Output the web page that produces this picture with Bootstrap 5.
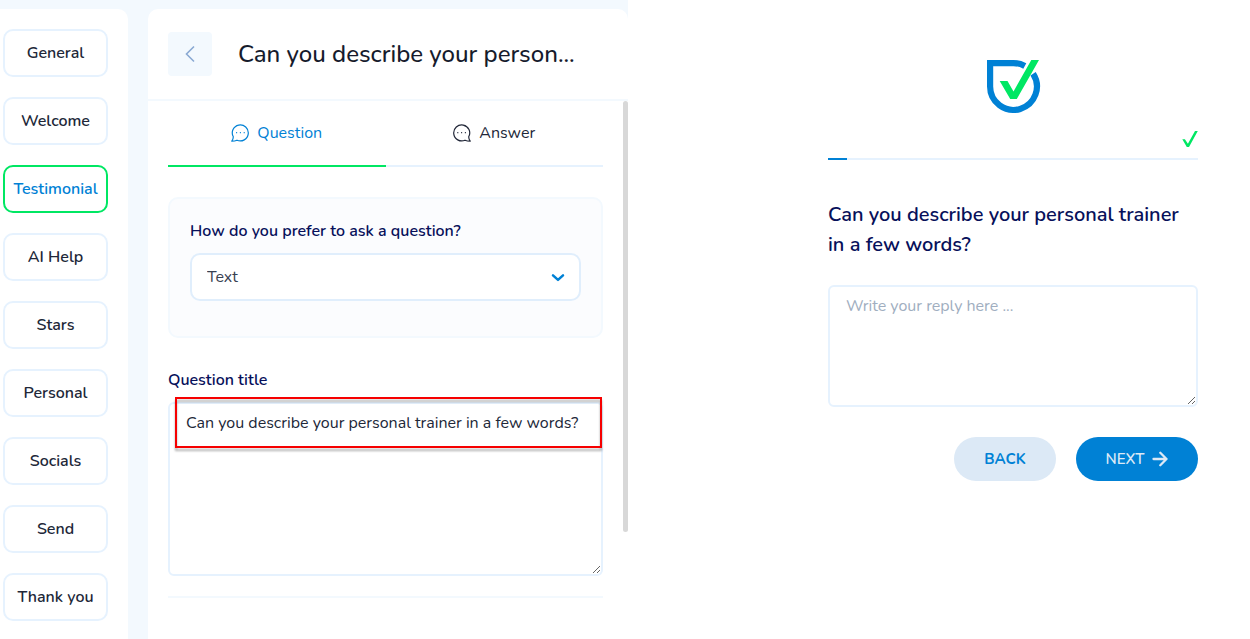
<!DOCTYPE html>
<html lang="en">
<head>
<meta charset="utf-8">
<meta name="viewport" content="width=device-width, initial-scale=1">
<title>Testimonial form editor</title>
<link href="https://cdn.jsdelivr.net/npm/bootstrap@5.3.0/dist/css/bootstrap.min.css" rel="stylesheet">
<style>
  :root { --brand: #0081d5; --accent: #00e763; --line: #e6f2fe; --soft: #f3f9fe; --ink: #212738; --navy: #07105a; }
  body { font-family: Nunito, Lato, "Open Sans", sans-serif; font-size: 16px; line-height: 24px; color: var(--ink); background: #fff; overflow: hidden; }
  .workspace { background: var(--soft); padding-top: 9px; gap: 20px; height: 100vh; overflow: hidden; }
  .steps { width: 128px; padding: 20px 20px 20px 3px; gap: 20px; border-top-right-radius: 10px; }
  .step-btn { height: 48px; padding: 0; border: 2px solid var(--line); border-radius: 10px; background: #fff; color: var(--ink); font-weight: 600; line-height: 24px; }
  .step-btn.active { border-color: var(--accent); color: var(--brand); background: #fff; }
  .editor { width: 480px; border-radius: 10px 10px 0 0; }
  .editor-head { height: 92px; padding: 0 44px 0 20px; gap: 26px; border-bottom: 2px solid var(--soft); }
  .back-btn { width: 44px; height: 44px; border: 0; border-radius: 4px; background: var(--soft); padding: 0; }
  .editor-title { font-size: 24px; line-height: 32px; font-weight: 500; color: #161b2c; margin: 0; }
  .editor-body { padding: 0 25px 0 20px; }
  .scroll-thumb { position: absolute; top: 0; right: 0; width: 5px; height: 431px; border-radius: 3px; background: #d8d8d8; }
  .tab-btn { height: 66px; padding: 0; border: 0; border-bottom: 2px solid var(--line); background: none; color: var(--ink); gap: 8px; }
  .tab-btn.active { border-color: var(--accent); color: var(--brand); }
  .ask-box { margin-top: 30px; height: 141px; padding: 20px 20px 0; border: 2px solid var(--soft); border-radius: 10px; background: #fbfcfe; }
  .field-label { display: block; font-weight: 600; color: var(--navy); margin: 0; }
  .title-label { margin-top: 30px; }
  .ask-select { height: 48px; margin-top: 10px; padding: 0 40px 0 15px; border: 2px solid #e0eefc; border-radius: 10px; color: #374151; line-height: 24px;
    background: #fff url("data:image/svg+xml,%3Csvg xmlns='http://www.w3.org/2000/svg' viewBox='0 0 14 10'%3E%3Cpath d='M2 3.300l5 4.600 5-4.600' fill='none' stroke='%230081d5' stroke-width='2.500' stroke-linecap='round' stroke-linejoin='round'/%3E%3C/svg%3E") no-repeat right 14px center / 14px 10px; }
  .text-area { border: 2px solid var(--line); border-radius: 6px; color: var(--ink); resize: vertical; line-height: 24px; }
  .title-area { height: 174px; padding: 7px 16px; margin-top: 10px; }
  .reply-area { height: 122px; padding: 7px 16px; margin-top: 25px; }
  .reply-area::placeholder { color: #a0aec0; opacity: 1; }
  .marker { position: absolute; top: -5px; left: 7px; right: 1px; height: 51px; border: 2px solid #f60000; filter: drop-shadow(0 3px 1px rgba(0,0,0,.3)); pointer-events: none; }
  .end-line { height: 2px; margin-top: 20px; background: var(--soft); }
  .preview { padding: 60px 52px 0 200px; }
  .preview-logo { overflow: visible; }
  .preview-check { margin-top: 17px; height: 18px; }
  .step-progress { height: 2px; margin-top: 10px; border-radius: 0; background: var(--line); }
  .step-progress .progress-bar { background: var(--brand); }
  .preview-question { font-size: 20px; line-height: 30px; font-weight: 600; color: var(--navy); margin: 40px 0 0; }
  .preview-actions { gap: 20px; margin-top: 30px; }
  .pill-btn { height: 44px; border: 0; border-radius: 22px; padding: 0; font-size: 15px; line-height: 24px; }
  .pill-back { width: 102px; font-weight: 700; background: #dce9f6; color: var(--brand); }
  .pill-next { width: 122px; gap: 8px; font-weight: 600; background: var(--brand); color: #dce9f6; }
</style>
<script src="https://cdn.jsdelivr.net/npm/bootstrap@5.3.0/dist/js/bootstrap.bundle.min.js"></script>
</head>
<body>
<div class="d-flex vh-100">
  <div class="workspace d-flex flex-shrink-0">
    <nav class="steps bg-white d-flex flex-column" aria-label="Form steps">
      <button class="btn step-btn w-100 flex-shrink-0">General</button>
      <button class="btn step-btn w-100 flex-shrink-0">Welcome</button>
      <button class="btn step-btn active w-100 flex-shrink-0">Testimonial</button>
      <button class="btn step-btn w-100 flex-shrink-0">AI Help</button>
      <button class="btn step-btn w-100 flex-shrink-0">Stars</button>
      <button class="btn step-btn w-100 flex-shrink-0">Personal</button>
      <button class="btn step-btn w-100 flex-shrink-0">Socials</button>
      <button class="btn step-btn w-100 flex-shrink-0">Send</button>
      <button class="btn step-btn w-100 flex-shrink-0">Thank you</button>
    </nav>

    <section class="editor bg-white">
      <header class="editor-head d-flex align-items-center">
        <button class="back-btn d-flex align-items-center justify-content-center flex-shrink-0" aria-label="Back">
          <svg width="12" height="18" viewBox="0 0 12 18" fill="none" stroke="#8aa9d3" stroke-width="1.600"><path d="M10 1.500L2.500 9l7.500 7.500"/></svg>
        </button>
        <h1 class="editor-title text-nowrap">Can you describe your person...</h1>
      </header>

      <div class="editor-body position-relative">
        <div class="scroll-thumb"></div>
        <div class="d-flex" role="tablist">
          <button class="tab-btn active w-50 d-flex align-items-center justify-content-center" role="tab" aria-selected="true">
            <svg width="18" height="18" viewBox="0 0 18 18" fill="none" stroke="currentColor" stroke-width="1.200" stroke-linejoin="round"><path d="M2.300 12.800A8 8 0 1 1 6 16.200c-1.300.600-3 1-5.200 1 1-1.400 1.500-2.900 1.500-4.400z"/><path d="M5.600 8.700h.010M9.400 8.700h.010M13.200 8.700h.010" stroke-linecap="round" stroke-width="1.300"/></svg>
            Question
          </button>
          <button class="tab-btn w-50 d-flex align-items-center justify-content-center" role="tab" aria-selected="false">
            <svg width="18" height="18" viewBox="0 0 18 18" fill="none" stroke="currentColor" stroke-width="1.200" stroke-linejoin="round"><path d="M15.700 12.800A8 8 0 1 0 12 16.200c1.300.600 3 1 5.200 1-1-1.400-1.500-2.900-1.500-4.400z"/><path d="M4.800 8.700h.010M8.600 8.700h.010M12.400 8.700h.010" stroke-linecap="round" stroke-width="1.300"/></svg>
            Answer
          </button>
        </div>

        <div class="ask-box">
          <label class="field-label" for="askType">How do you prefer to ask a question?</label>
          <select class="form-select ask-select" id="askType">
            <option>Text</option>
          </select>
        </div>

        <label class="field-label title-label" for="questionTitle">Question title</label>
        <div class="position-relative">
          <textarea class="form-control text-area title-area" id="questionTitle">Can you describe your personal trainer in a few words?</textarea>
          <div class="marker"></div>
        </div>
        <div class="end-line"></div>
      </div>
    </section>
  </div>

  <main class="preview flex-grow-1">
    <svg class="preview-logo d-block mx-auto" width="52" height="53" viewBox="0 0 52 53">
      <path d="M37.800 6A23.400 23.400 0 0 0 26.500 3.100H3.100V26.500A23.400 23.400 0 1 0 46.100 13.700" fill="none" stroke="#0081d5" stroke-width="6.200"/>
      <path d="M12.700 21h7.800l6 10.500L44.300 0H52L29.800 39h-6.600z" fill="#00e763"/>
    </svg>
    <div class="preview-check d-flex justify-content-end">
      <svg width="16" height="18" viewBox="0 0 16 18"><path d="M.3 9.200h2.600l3 4.500L13 1h2.800L7 17H4.800z" fill="#00e763"/></svg>
    </div>
    <div class="progress step-progress" role="progressbar" aria-label="Progress" aria-valuenow="5" aria-valuemin="0" aria-valuemax="100">
      <div class="progress-bar" style="width:5%"></div>
    </div>
    <label class="preview-question d-block" for="reply">Can you describe your personal trainer in a few words?</label>
    <textarea class="form-control text-area reply-area" id="reply" placeholder="Write your reply here ..."></textarea>
    <div class="preview-actions d-flex justify-content-end">
      <button class="btn pill-btn pill-back">BACK</button>
      <button class="btn pill-btn pill-next d-flex align-items-center justify-content-center">NEXT
        <svg width="16" height="16" viewBox="0 0 16 16" fill="none" stroke="currentColor" stroke-width="2.300" stroke-linecap="round" stroke-linejoin="round"><path d="M1.500 8h13M8.300 1.800L14.500 8l-6.200 6.200"/></svg>
      </button>
    </div>
  </main>
</div>
</body>
</html>
